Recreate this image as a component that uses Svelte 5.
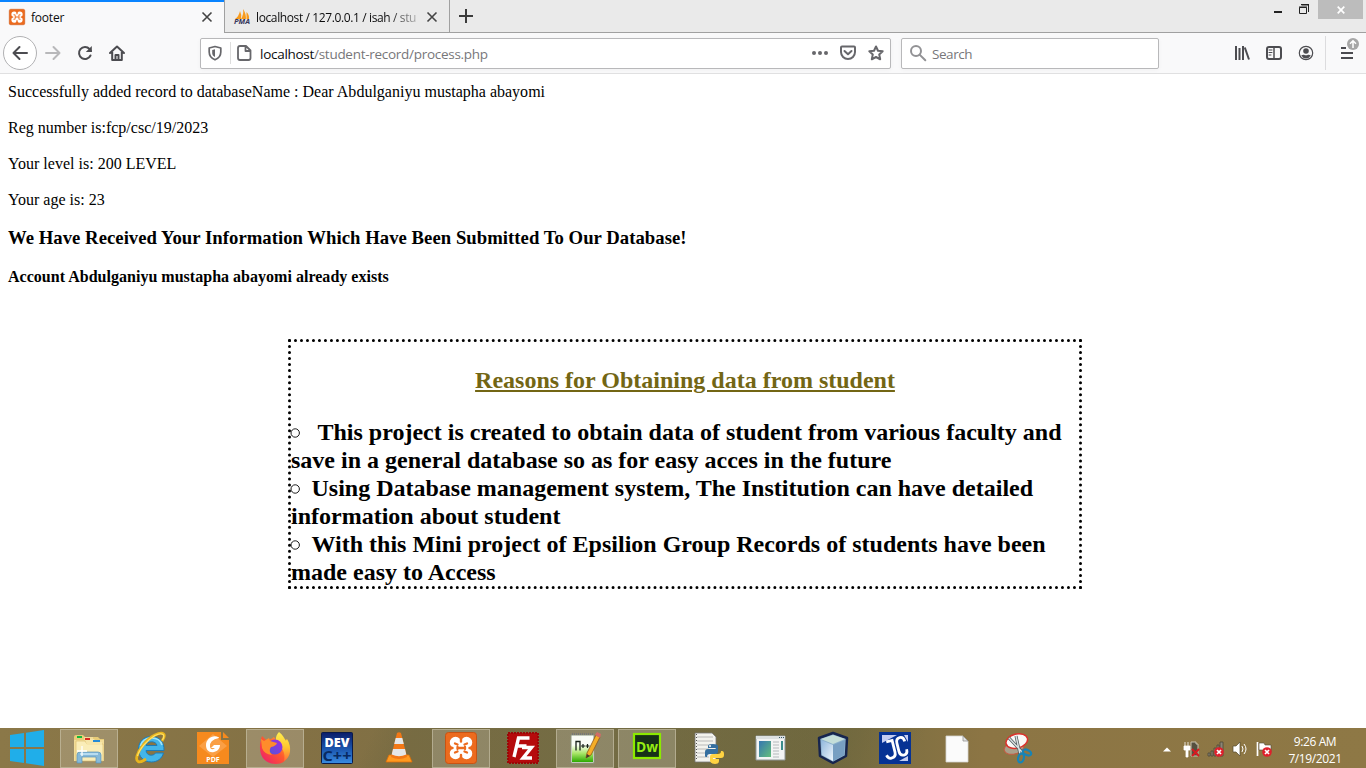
<script>
  const facts = [
    'Successfully added record to databaseName : Dear Abdulganiyu mustapha abayomi',
    'Reg number is:fcp/csc/19/2023',
    'Your level is: 200 LEVEL',
    'Your age is: 23'
  ];
  const reasons = [
    { pad: 22, lines: ['This project is created to obtain data of student from various faculty and', 'save in a general database so as for easy acces in the future'] },
    { pad: 16, lines: ['Using Database management system, The Institution can have detailed', 'information about student'] },
    { pad: 16, lines: ['With this Mini project of Epsilion Group Records of students have been', 'made easy to Access'] }
  ];
  const apps = [
    { id: 'explorer', open: true }, { id: 'ie' }, { id: 'pdf' }, { id: 'firefox', open: true },
    { id: 'dev' }, { id: 'vlc' }, { id: 'xampp', open: true }, { id: 'filezilla' },
    { id: 'npp', open: true }, { id: 'dw', open: true }, { id: 'python' }, { id: 'window' },
    { id: 'cube' }, { id: 'jc' }, { id: 'page' }, { id: 'snip' }
  ];
</script>

{#snippet xampp()}
  <rect x="0.5" y="0.5" width="31" height="31" rx="3" fill="#ec6b1e" stroke="#c95312" />
  <path d="M8 8h16v16H8z" fill="#fff" />
  <path d="M10.500 10.500h.01M21.500 10.500h.01M10.500 21.500h.01M21.500 21.500h.01" stroke="#fff" stroke-width="11.500" stroke-linecap="round" />
  <path d="M16 4v5.500M16 28v-5M4 16h3.500M28 16h-3.500" stroke="#ec6b1e" stroke-width="2.400" stroke-linecap="round" />
  <path d="M10 11.500l2.500 1M10 20.500l2.500-1M13 16h7M22 11.500l-2.500 1M22 20.500l-2.500-1M12.500 15v2M20 15v2" fill="none" stroke="#ec6b1e" stroke-width="2.300" stroke-linecap="round" />
{/snippet}

{#snippet icon(id)}
  <svg class="app-icon" viewBox="0 0 32 32">
    {#if id === 'explorer'}
      <path d="M1 5q0-2 2-2h7l2 2h13l2 2h4v22H1z" fill="#e8cc78" />
      <path d="M1 8h10V5h9v3h11v21H1z" fill="#f2dc98" />
      <path d="M3 9h9l2 3h16v17H3z" fill="#faedb8" stroke="#d9b966" stroke-width=".6" />
      <path d="M12 7h9l2 3h6v3H14z" fill="#f7e6aa" />
      <path d="M4 4h5v2H4z" fill="#13b83a" /><path d="M12 6h5v2h-5z" fill="#d92b20" /><path d="M20 8h7v2h-7z" fill="#258bd6" />
      <path d="M4 31V23q0-3 3-3h18q3 0 3 3v8h-5v-6H9v6z" fill="#86b9d9" stroke="#5a93b8" stroke-width=".7" />
      <path d="M7 21h18v2H7z" fill="#b8dcf0" />
      <path d="M9 14v10M4 19h10" stroke="#fff" stroke-width="1.300" />
    {:else if id === 'ie'}
      <path d="M29 18.500H11c.4 5.500 7.500 6 9.500 2.500h8c-1.500 5.500-6 9-12 9C8.500 30 3.500 24.500 3.500 17S9 4.500 16.500 4.500 29.500 10 29 18.500zM11 13.500h11c-.8-5-10-5-11 0z" fill="#43b5ea" stroke="#1c7cb9" stroke-width="1" />
      <path d="M5.500 14q2-8 11-8 8.500 0 10.500 7" fill="none" stroke="#a0e3fa" stroke-width="1.600" />
      <path d="M27 9C32 2 28-1 20 3C11 7.500 4 17 2 24C.5 30 4 32 11 27" fill="none" stroke="#e9b51d" stroke-width="2.800" />
      <path d="M27.500 8C31 2 27 0 20 3.500C12 8 4 18 2.500 24" fill="none" stroke="#ffe26a" stroke-width="1.200" />
    {:else if id === 'pdf'}
      <path d="M0 0h24v8h8v24H0z" fill="#f68a1e" /><path d="M26 0l6 6h-6z" fill="#f68a1e" />
      <path d="M16 2L30 14 16 25 2 14z" fill="#fa9f45" />
      <path d="M22 5.500C16 2 9 7 9 13c0 5 3 8 8 7 4-1 6-4 6-7h-6l-3 3h4q-4 3-5-1-1-7 9-9z" fill="#fff" />
      <text x="16" y="30" font-family="Open Sans, sans-serif" font-size="7" font-weight="700" text-anchor="middle" fill="#fff">PDF</text>
    {:else if id === 'firefox'}
      <path d="M3 4l4 4q3-1 5-1l3-2 2 3 3-7q3 2 4 6l2 3 1-3c7 8 4 25-10 25C2 32-2 18 3 4z" fill="url(#fx)" />
      <path d="M20 0c4 3 5 6 7 9l1-2c5 8 4 18-3 22 2-8-2-14-7-18-2-4-1-8 2-11z" fill="url(#fx3)" />
      <circle cx="16" cy="15" r="7.500" fill="url(#fxp)" />
      <path d="M2 7l3 2 5-3 1 3 7 2q-1 3-6 4-3 4 1 8-8-1-10-7z" fill="#ff8c2b" />
    {:else if id === 'dev'}
      <rect x=".5" y=".5" width="31" height="31" rx="1" fill="url(#devg)" stroke="#0a1a48" />
      <text x="16" y="14.500" font-family="Open Sans, sans-serif" font-size="13" font-weight="800" text-anchor="middle" textLength="25" lengthAdjust="spacingAndGlyphs" fill="#fff">DEV</text>
      <text x="16" y="29" font-family="Open Sans, sans-serif" font-size="15" font-weight="700" text-anchor="middle" textLength="29" lengthAdjust="spacingAndGlyphs" fill="#082a62">C++</text>
    {:else if id === 'vlc'}
      <path d="M6 23h20l3 7H3z" fill="#ff9a20" stroke="#e06f07" stroke-width=".8" />
      <path d="M14 1q2-1.500 4 0l6 24q-8 4-16 0z" fill="#f37816" />
      <path d="M12.700 6h6.600l1.500 6h-9.600zM10 17h12l1.300 5.500q-7.300 3.500-14.600 0z" fill="#e5e7e8" />
    {:else if id === 'xampp'}
      {@render xampp()}
    {:else if id === 'filezilla'}
      <rect x="1" y="1" width="30" height="30" fill="#b50b0c" stroke="#9c0707" stroke-width="2" stroke-dasharray="2 1" />
      <path d="M7 25L11.500 6h11M9.500 14h10M15 15.500h9.500L16 26H25" fill="none" stroke="#fff" stroke-width="3.400" />
    {:else if id === 'npp'}
      <path d="M2 3h23v28H2z" fill="#f9fcf6" stroke="#8b957f" /><path d="M3 13h21v17H3z" fill="url(#nppg)" />
      <path d="M3 2h21" stroke="#777" stroke-width="2" stroke-dasharray="1 1" />
      <path d="M7 18.500V9.500h4v9" fill="none" stroke="#17201a" stroke-width="1.300" /><path d="M12 14h4M14 12v4M16.500 14h4M18.500 12v4" stroke="#17201a" stroke-width="1.200" />
      <path d="M17 26l1-5L27 3l4 2-9 18z" fill="#f5ae27" stroke="#8e561b" stroke-width=".8" /><path d="M26 3l2-3 4 2-1 4z" fill="#d26c67" /><path d="M17 26l1-4 3 2z" fill="#44392b" />
    {:else if id === 'dw'}
      <rect x="3" y="2" width="26" height="24" fill="#173018" stroke="#8cea00" stroke-width="2.200" />
      <text x="16" y="20" font-family="Open Sans, sans-serif" font-size="15" font-weight="700" text-anchor="middle" textLength="22" lengthAdjust="spacingAndGlyphs" fill="#96ee13">Dw</text>
    {:else if id === 'python'}
      <path d="M2 1h17l4 4v25H2z" fill="#f3f3ee" stroke="#777" stroke-width=".8" /><path d="M4 5h16M4 9h16M4 13h16M4 17h12M4 21h12M4 25h12" stroke="#aaa" stroke-width=".8" />
      <path d="M3.500 2v27" stroke="#555" stroke-dasharray="1 2" />
      <path d="M12 24v-4q0-3 3-3h8v-1h-8v-2q0-2 5-2t5 2v5q0 3-3 3h-5q-3 0-3 3h-1q-1 0-1-1z" fill="#356f9f" />
      <path d="M31 19v4q0 3-3 3h-8v1h6v2q0 3-4 3t-5-3v-4q0-3 3-3h5q3 0 3-3h1q2 0 2 3z" fill="#ffd342" /><circle cx="17" cy="14" r="1" fill="#fff" />
    {:else if id === 'window'}
      <path d="M1 4h29v24H1z" fill="#f3f4f4" stroke="#8f9697" /><path d="M1 4h29v3H1z" fill="#dce0e1" />
      <path d="M24 5.500h1M26 5.500h1M28 5.500h1" stroke="#356" /><path d="M4 9h12v16H4z" fill="url(#wing)" />
      <path d="M18 10h6M18 13h6M18 16h6M18 19h6M18 22h6M18 25h6" stroke="#b4b9bc" /><path d="M26 9h2v9h-2z" fill="#3b8c8c" />
    {:else if id === 'cube'}
      <path d="M16 1l14 5-1 18-13 7L3 24 2 6z" fill="#8bb0cc" stroke="#17254e" stroke-width="2.500" stroke-linejoin="round" />
      <path d="M4 7l12-4 12 4-12 5z" fill="#c5ded9" /><path d="M4 8l12 5v16L5 23z" fill="url(#cubeg)" /><path d="M28 8l-12 5v16l11-6z" fill="#789fc2" />
    {:else if id === 'jc'}
      <path d="M0 0h32v32H0z" fill="#063294" /><path d="M3 3h15L3 11zM25 3h4v7zM29 24v5H20z" fill="#c4cdf2" />
      <path d="M9 8h6v12q0 5-5 5-3 0-4-4M27 12q0-5-4-5t-4 5v8q0 5 4 5t4-5" transform="rotate(-14 16 16)" fill="none" stroke="#fff" stroke-width="2.800" />
    {:else if id === 'page'}
      <path d="M5 4h17l5 5v21H5z" fill="#fbfbfb" stroke="#d6d6d2" stroke-width=".8" /><path d="M22 4v5h5z" fill="#e4e4e4" stroke="#888" stroke-width=".7" />
    {:else if id === 'snip'}
      <ellipse cx="11" cy="16" rx="10" ry="6" fill="#aaa08a" stroke="#c65a43" transform="rotate(-15 11 16)" />
      <ellipse cx="13.500" cy="9" rx="11" ry="7" fill="#f9f9f7" stroke="#dc312b" stroke-width="1.500" transform="rotate(-14 14 8)" />
      <path d="M6 6l14 15M13 4l4 18" stroke="#4b5559" stroke-width="3" /><path d="M6 6l14 15M13 4l4 18" stroke="#d9dfe0" stroke-width="1.500" />
      <ellipse cx="24" cy="20.500" rx="4.500" ry="2.600" fill="none" stroke="#1684b6" stroke-width="2.200" transform="rotate(25 24 20.500)" /><ellipse cx="18" cy="26" rx="2.800" ry="4.500" fill="none" stroke="#1684b6" stroke-width="2.200" transform="rotate(15 18 26)" />
    {/if}
  </svg>
{/snippet}

{#snippet cross()}
  <svg class="cross" viewBox="0 0 12 12"><path d="M1.500 1.500l9 9M10.500 1.500l-9 9" /></svg>
{/snippet}

<div class="screen">
  <svg class="defs" width="0" height="0">
    <defs>
      <linearGradient id="fx" x1="0" y1="1" x2="1" y2="0"><stop stop-color="#eb1477" /><stop offset=".5" stop-color="#ff5a2c" /><stop offset="1" stop-color="#ffdb35" /></linearGradient>
      <linearGradient id="fx3" x1="0" y1="0" x2="0" y2="1"><stop stop-color="#fff04e" /><stop offset=".5" stop-color="#ffc830" /><stop offset="1" stop-color="#ff7139" /></linearGradient>
      <linearGradient id="fxp" x1="1" y1="0" x2="0" y2="1"><stop stop-color="#a42be0" /><stop offset="1" stop-color="#4f58d8" /></linearGradient>
      <linearGradient id="devg" x1="0" y1="0" x2="0" y2="1"><stop stop-color="#0a1c69" /><stop offset=".55" stop-color="#1c58b0" /><stop offset="1" stop-color="#398ce2" /></linearGradient>
      <linearGradient id="nppg" x1="0" y1="0" x2="0" y2="1"><stop stop-color="#fbfff4" /><stop offset=".5" stop-color="#a7e567" /><stop offset="1" stop-color="#2ca900" /></linearGradient>
      <linearGradient id="wing" x1="0" y1="0" x2="1" y2="1"><stop stop-color="#3676b1" /><stop offset="1" stop-color="#63bd7c" /></linearGradient>
      <linearGradient id="cubeg" x1="0" y1="0" x2="1" y2="1"><stop stop-color="#8fb6dc" /><stop offset="1" stop-color="#eef5fc" /></linearGradient>
    </defs>
  </svg>

  <header class="tabs">
    <div class="tab active">
      <svg class="favicon" viewBox="0 0 32 32">{@render xampp()}</svg>
      <span class="title">footer</span>{@render cross()}
    </div>
    <div class="tab second">
      <svg class="favicon" viewBox="0 0 16 16"><path d="M1 10Q5 7 6 2q2 4 1 8zM7 10q3-5 2-10 3 4 3 10zM12.500 10V3q3 3 2.500 7z" fill="#f89b1d" /><text x="0" y="15" font-family="Open Sans, sans-serif" font-size="6.500" font-weight="700" font-style="italic" textLength="16" lengthAdjust="spacingAndGlyphs" fill="#36365d">PMA</text></svg>
      <span class="title long">localhost / 127.0.0.1 / isah / stu</span>{@render cross()}
    </div>
    <svg class="plus" viewBox="0 0 14 14"><path d="M7 0v14M0 7h14" /></svg>
    <div class="window-controls">
      <svg class="min" viewBox="0 0 10 12"><path d="M1 12h8" stroke="#222" stroke-width="2" /></svg>
      <svg class="restore" viewBox="0 0 10 10"><path d="M.5 3.500h7v6h-7zM2.500 1h7v7" fill="none" stroke="#222" /><path d="M0 3h8M2 .5h8" stroke="#222" /></svg>
      <span class="close"><svg viewBox="0 0 8 8"><path d="M.7.7l6.600 6.600M7.300.7L.7 7.300" stroke="#fff" stroke-width="1.700" /></svg></span>
    </div>
  </header>

  <nav class="toolbar">
    <span class="back"><svg class="i16" viewBox="0 0 16 16"><path d="M15 8H1.500M7.500 2l-6 6 6 6" /></svg></span>
    <svg class="i16 forward" viewBox="0 0 16 16"><path d="M1 8h13.500M8.500 2l6 6-6 6" /></svg>
    <svg class="i16 reload" viewBox="0 0 16 16"><path d="M13.500 10.500A6 6 0 1 1 12.500 4L14 6" /><path d="M14.800 1v6H8.800z" class="solid" /></svg>
    <svg class="i16 home" viewBox="0 0 16 16"><path d="M1 8l7-6.500L15 8M3.200 7v8h9.600V7" /><path d="M6.500 15v-5h3v5" /></svg>
    <div class="address field">
      <svg class="i16 shield" viewBox="0 0 16 16"><path d="M8 1.500L13.800 3v4c0 4-2.200 6.300-5.800 7.800C4.400 13.300 2.200 11 2.200 7V3z" stroke-width="1.700" /><path d="M8 4.200L5.200 5v3c0 2 1 3 2.800 4z" class="solid" /></svg>
      <span class="split"></span>
      <svg class="i16 doc" viewBox="0 0 16 16"><path d="M4 1h6l4.500 4.500V13q0 2-2 2H4q-2 0-2-2V3q0-2 2-2zM9.500 1v5h5" stroke-width="1.800" /></svg>
      <span class="url"><b>localhost</b>/student-record/process.php</span>
      <svg class="i16 dots" viewBox="0 0 16 16"><circle cx="2" cy="8" r="2" /><circle cx="8" cy="8" r="2" /><circle cx="14" cy="8" r="2" /></svg>
      <svg class="i16 pocket" viewBox="0 0 16 16"><path d="M2 1.500h12q1 0 1 1V7a7 7 0 0 1-14 0V2.500q0-1 1-1zM4.500 6L8 9.300 11.500 6" /></svg>
      <svg class="i16 star" viewBox="0 0 16 16"><path d="M8 1.500l2 4.200 4.700.5-3.500 3.200 1 4.900L8 12l-4.200 2.300 1-4.900L1.300 6.200 6 5.700z" /></svg>
    </div>
    <div class="search field">
      <svg class="i16 magnifier" viewBox="0 0 16 16"><circle cx="6" cy="6" r="5" /><path d="M9.600 9.600l5.700 5.700" /></svg>
      <span>Search</span>
    </div>
    <svg class="i16 library" viewBox="0 0 16 16"><path d="M2 1v14M5.500 3v12M9 1v14M10.800 2.500L15 14.500" /></svg>
    <svg class="i16 sidebar" viewBox="0 0 16 16"><rect x="1" y="2" width="14" height="12" rx="2" /><path d="M8 2v12" stroke-width="1.500" /><path d="M3 5h3M3 7.500h3M3 10h2" stroke-width="1" /></svg>
    <svg class="i16 account" viewBox="0 0 16 16"><circle cx="8" cy="8" r="6.700" stroke-width="1.200" /><circle cx="8" cy="6" r="2.800" class="solid" /><path d="M3.200 10.500q1.300-1 2.800-.8 2 1.300 4 0 1.500-.2 2.800.8Q11 13.500 8 13.500t-4.800-3z" class="solid" /></svg>
    <span class="bar"></span>
    <svg class="menu" viewBox="0 0 20 28"><path d="M1 10h5M1 15h12M1 20h12" stroke="#4a4a4f" stroke-width="2" /><circle cx="13" cy="6" r="6" fill="#a6a6a6" /><path d="M13 10V3M10 5.800l3-3 3 3" fill="none" stroke="#fff" stroke-width="1.500" /></svg>
  </nav>

  <main>
    {#each facts as fact}<p>{fact}</p>{/each}
    <h3>We Have Received Your Information Which Have Been Submitted To Our Database!</h3>
    <h4>Account Abdulganiyu mustapha abayomi already exists</h4>
    <section>
      <svg class="frame" viewBox="0 0 794 250">
        <path d="M1.500 1.500H792.500M1.500 248.500H792.500" stroke-dasharray="0 5.992" />
        <path d="M1.500 1.500V248.500M792.500 1.500V248.500" stroke-dasharray="0 6.024" />
      </svg>
      <h2>Reasons for Obtaining data from student</h2>
      <ul>
        {#each reasons as reason}
          <li>
            <svg class="bullet" viewBox="0 0 10 10" style:margin-right="{reason.pad - 5.500}px"><circle cx="4.200" cy="5" r="4.200" /></svg><span class="line">{reason.lines[0]}</span><br />{reason.lines[1]}
          </li>
        {/each}
      </ul>
    </section>
  </main>

  <footer>
    <span class="start"><svg viewBox="0 0 34 36"><path d="M0 5l14-2v14H0zM16 2.700L34 0v17H16zM0 19h14v14L0 31zM16 19h18v17l-18-2.700z" fill="#20aee9" /></svg></span>
    {#each apps as app}
      <span class="app" class:open={app.open}>{@render icon(app.id)}</span>
    {/each}
    <div class="tray">
      <svg class="caret" viewBox="0 0 8 5"><path d="M0 4.500L4 .5l4 4z" fill="#fff" /></svg>
      <svg class="tray-icon" viewBox="0 0 16 16"><path d="M7 3V1h5v2h2v12H7z" fill="#55503f" stroke="#c9c3b0" /><path d="M1 1v4M4 1v4M0 5h6v4H4v7H2V9H0z" stroke="#fff" stroke-width=".8" fill="#fff" /><path d="M8 8l7 7M15 8l-7 7" stroke="#d71920" stroke-width="2" /></svg>
      <svg class="tray-icon" viewBox="0 0 16 16"><path d="M0 12h2v3H0zM3 10h2v5H3zM6 7h2v8H6zM9 4h2v11H9zM12 1h3v14h-3z" fill="#8b8575" stroke="#4d4737" stroke-width=".8" /><circle cx="11" cy="11" r="4.800" fill="#df202c" /><path d="M9 9l4 4M13 9l-4 4" stroke="#fff" stroke-width="1.700" /></svg>
      <svg class="tray-icon" viewBox="0 0 16 16"><path d="M1 5h3l4-4v14l-4-4H1z" fill="#fff" stroke="#554a31" stroke-width=".7" /><path d="M10 5q2 3 0 6M12 3q4 5 0 10" fill="none" stroke="#fff" /></svg>
      <svg class="tray-icon" viewBox="0 0 16 16"><path d="M1.500 1v14" stroke="#fff" stroke-width="1.700" /><path d="M3 2h5l1 2h6v7H8L7 9H3z" fill="#fff" stroke="#4d4737" stroke-width=".6" /><circle cx="11" cy="11" r="4.800" fill="#df202c" /><path d="M9 9l4 4M13 9l-4 4" stroke="#fff" stroke-width="1.700" /></svg>
    </div>
    <div class="clock"><span>9:26 AM</span><span>7/19/2021</span></div>
  </footer>
</div>

<style>
  :global(body) { margin: 0; overflow: hidden; }
  * { box-sizing: border-box; }
  svg { display: block; flex: none; overflow: visible; }
  .screen { width: 1366px; height: 768px; display: flex; flex-direction: column; background: #fff; font-family: "Open Sans", "Noto Sans", sans-serif; overflow: hidden; }
  .defs { height: 0; }
  .tabs { height: 33px; flex: none; display: flex; background: #eaeaea; box-shadow: inset 0 -1px #a0a0a0; }
  .tab { display: flex; align-items: center; font-size: 12px; height: 33px; padding-top: 1px; color: #0c0c0d; }
  .active { width: 224px; background: #f9f9fa; border-top: 2px solid #0a84ff; padding: 0 11px 1px 9px; }
  .second { width: 226px; border: solid #a0a0a0; border-width: 0 1px 1px; padding-left: 9px; padding-right: 11px; padding-top: 2px; }
  .favicon { width: 16px; height: 16px; margin-right: 6px; }
  .title { letter-spacing: -.2px; white-space: nowrap; flex: 1; }
  .active .title { padding-top: 1px; }
  .long { flex: none; width: 164px; margin-right: 6px; letter-spacing: -.38px; mask-image: linear-gradient(90deg, #000 80%, transparent 104%); }
  .cross { width: 12px; height: 12px; fill: none; stroke: #444; stroke-width: 1.6; }
  .plus { width: 14px; height: 14px; margin: 9px 0 0 9px; stroke: #3b3b3b; stroke-width: 2; }
  .window-controls { display: flex; align-items: flex-start; margin-left: auto; padding-right: 3px; }
  .min { width: 10px; height: 12px; margin-right: 16px; }
  .restore { width: 10px; height: 10px; margin: 4px 9px 0 0; }
  .close { width: 45px; height: 19px; background: #bcbcbc; display: grid; place-items: center; }
  .close svg { width: 8px; height: 8px; }
  .toolbar { height: 41px; flex: none; display: flex; align-items: center; background: #f9f9fa; border-bottom: 1px solid #e0e0e1; padding-left: 3px; }
  .i16 { width: 16px; height: 16px; fill: none; stroke: #4c4c50; stroke-width: 2; stroke-linejoin: round; stroke-linecap: round; }
  .solid { fill: #4c4c50; stroke: none; }
  .back { width: 34px; height: 34px; border: 1px solid #b1b1b3; border-radius: 50%; background: #fff; display: grid; place-items: center; }
  .forward { margin-left: 8px; stroke: #b8b8ba; }
  .reload { margin-left: 16px; }
  .home { margin-left: 16px; }
  .field { height: 31px; border: 1px solid #b8b8ba; border-radius: 2px; background: #fff; display: flex; align-items: center; box-shadow: 0 1px 4px rgba(0,0,0,.04); font-size: 13.5px; }
  .address { width: 691px; margin-left: 75px; padding: 0 6px; }
  .address .i16 { stroke: #67676b; }
  .address .solid { fill: #67676b; }
  .split { height: 22px; width: 1px; background: #ddd; margin: 0 5px 0 7px; }
  .url { margin-left: 8px; padding-top: 2px; color: #77777a; flex: 1; letter-spacing: -.28px; }
  .url b { color: #0c0c0d; font-weight: 400; }
  .address .dots { fill: #67676b; stroke: none; }
  .pocket, .star { margin-left: 12px; }
  .search { width: 258px; margin-left: 10px; padding-left: 8px; color: #77777a; }
  .search span { margin-left: 6px; padding-top: 2px; letter-spacing: -.45px; }
  .magnifier { stroke: #929295; }
  .library { margin-left: 75px; stroke-linecap: butt; }
  .sidebar, .account { margin-left: 16px; }
  .bar { width: 1px; height: 34px; background: #dcdcde; margin-left: 11px; }
  .menu { width: 20px; height: 28px; margin: -3px 0 0 14px; }
  main { flex: 1; padding: 9px 8px 0; font-family: "Liberation Serif", serif; color: #000; min-height: 0; }
  p { margin: 0 0 18px; font-size: 16px; line-height: 18px; letter-spacing: .01px; }
  h3 { margin: 18px 0 0; font-size: 18.72px; line-height: 21px; letter-spacing: .03px; }
  h4 { margin: 20px 0 0; font-size: 16px; line-height: 18px; letter-spacing: .02px; }
  section { position: relative; width: 794px; height: 250px; margin: 53px 0 0 280px; padding: 3px; display: flow-root; }
  .frame { position: absolute; inset: 0; width: 794px; height: 250px; fill: none; stroke: #000; stroke-width: 3; stroke-linecap: round; }
  h2 { margin: 24px 0; text-align: center; font-size: 24px; line-height: 28px; color: #736614; text-decoration: underline; }
  ul { list-style: none; margin: 0; padding: 0; font-size: 24px; line-height: 28px; font-weight: 700; white-space: nowrap; }
  .bullet { display: inline-block; width: 10px; height: 10px; fill: none; stroke: #000; stroke-width: .9; vertical-align: 2px; }
  footer { height: 40px; flex: none; display: flex; background: linear-gradient(115deg, transparent 0 27%, #65613c55 30% 62%, transparent 67%), linear-gradient(90deg, #8b7848, #827044 25%, #7b7148 43%, #756c40 60%, #8c7544 72%, #8e7845); }
  .start { width: 58px; padding: 2px 0 0 10px; }
  .start svg { width: 34px; height: 36px; }
  .app { width: 58px; height: 39px; margin: 1px 2px 0; padding-bottom: 2px; display: grid; place-items: center; border: 1px solid transparent; }
  .open { background: #ffffff30; border-color: #cbc4aa99; }
  .app-icon { width: 32px; height: 32px; }
  .tray { display: flex; align-items: center; gap: 8px; margin-left: auto; padding-top: 2px; }
  .caret { width: 8px; height: 5px; margin-right: 5px; }
  .tray-icon { width: 16px; height: 16px; }
  .clock { width: 86px; padding: 5px 0 0; margin-right: 8px; font-size: 12px; line-height: 17px; letter-spacing: -.4px; color: #fff; display: flex; flex-direction: column; align-items: center; }
</style>
